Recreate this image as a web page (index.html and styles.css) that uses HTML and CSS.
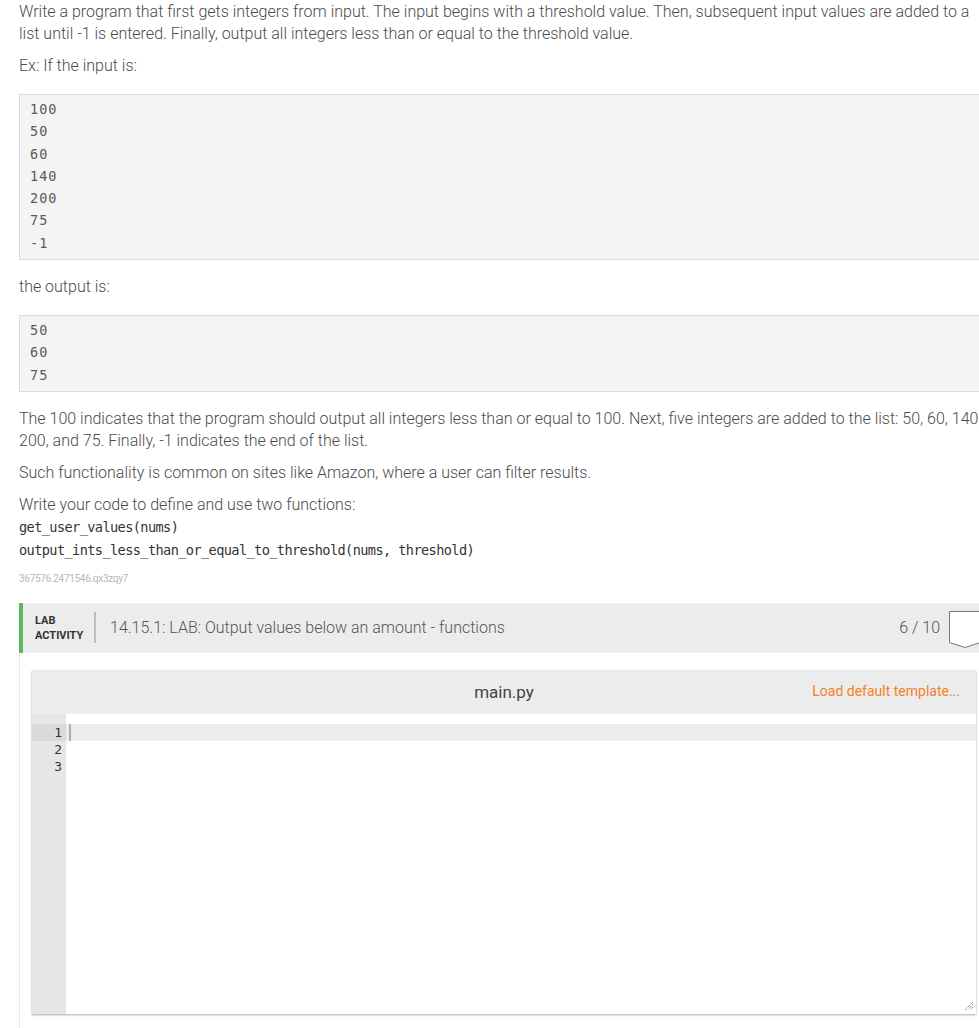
FILE: index.html
```html
<!DOCTYPE html>
<html>
<head>
<meta charset="utf-8">
<link rel="stylesheet" href="styles.css">
</head>
<body>
<div class="page">
  <p class="txt">Write a program that first gets integers from input. The input begins with a threshold value. Then, subsequent input values are added to a list until -1 is entered. Finally, output all integers less than or equal to the threshold value.</p>
  <p class="txt">Ex: If the input is:</p>
  <pre class="sample">100
50
60
140
200
75
-1</pre>
  <p class="txt">the output is:</p>
  <pre class="sample">50
60
75</pre>
  <p class="txt">The 100 indicates that the program should output all integers less than or equal to 100. Next, five integers are added to the list: 50, 60, 140, 200, and 75. Finally, -1 indicates the end of the list.</p>
  <p class="txt">Such functionality is common on sites like Amazon, where a user can filter results.</p>
  <p class="txt">Write your code to define and use two functions:<br><code class="fn">get_user_values(nums)</code><br><code class="fn">output_ints_less_than_or_equal_to_threshold(nums, threshold)</code></p>
  <div class="refid">367576.2471546.qx3zqy7</div>

  <div class="lab">
    <div class="lab-head">
      <div class="lab-label">LAB<br>ACTIVITY</div>
      <div class="lab-sep"></div>
      <div class="lab-title">14.15.1: LAB: Output values below an amount - functions</div>
      <div class="lab-score">6 / 10</div>
      <svg class="shield" width="32" height="38" viewBox="0 0 32 38">
        <path d="M0.5 0.5 H31.5 V31.5 L16 36.5 L0.5 31.5 Z" fill="#fff" stroke="#777" stroke-width="1"/>
      </svg>
    </div>
    <div class="lab-body">
      <div class="editor">
        <div class="ed-head">
          <span class="ed-file">main.py</span>
          <span class="ed-load">Load default template...</span>
        </div>
        <div class="ed-body">
          <div class="gutter">
            <div class="ln active">1</div>
            <div class="ln">2</div>
            <div class="ln">3</div>
          </div>
          <div class="code">
            <div class="cl active"><span class="cursor"></span></div>
            <div class="cl"></div>
            <div class="cl"></div>
          </div>
          <svg class="grip" width="8" height="8" viewBox="0 0 8 8">
            <path d="M8 0 L0 8 M8 2.5 L2.5 8 M8 5 L5 8" stroke="#666" stroke-width="1" stroke-dasharray="1 1"/>
          </svg>
        </div>
      </div>
    </div>
  </div>
</div>
</body>
</html>
```
FILE: styles.css
```css
html, body {
  margin: 0;
  padding: 0;
  overflow: hidden;
  background: #fff;
}
.page {
  width: 971px;
  padding: 1px 0 0 19px;
  font-family: Roboto, "Liberation Sans", sans-serif;
  font-weight: 300;
  font-size: 16px;
  color: #4b4b4b;
}
.txt {
  margin: 0 0 10px 0;
  line-height: 22px;
}
.sample {
  margin: 17px 0 16px 0;
  padding: 3px 10px 5px 10px;
  background: #f4f4f4;
  border: 1px solid #dcdcdc;
  font-family: "DejaVu Sans Mono", monospace;
  font-size: 13.5px;
  letter-spacing: 1px;
  line-height: 22.3px;
  color: #5a5a5a;
}
.fn {
  font-family: "DejaVu Sans Mono", monospace;
  font-size: 13.6px;
  letter-spacing: -0.6px;
  color: #333;
  font-weight: 400;
  line-height: 23px;
}
.refid {
  font-size: 10px;
  color: #b8b8b8;
  line-height: 14px;
  margin-top: 0;
  font-weight: 400;
  letter-spacing: -0.3px;
}
.lab {
  margin-top: 17px;
  border-left: 1px solid #e9e9e9;
}
.lab-head {
  display: flex;
  align-items: center;
  height: 50px;
  background: #ececec;
  border-left: 4px solid #5cb85c;
  margin-left: -1px;
  padding: 0 9px 0 12px;
}
.lab-label {
  font-weight: 700;
  font-size: 11px;
  line-height: 15px;
  color: #333;
  width: 59px;
  margin-top: 0;
}
.lab-sep {
  width: 2px;
  height: 31px;
  background: #bdbdbd;
  margin: 0 14px 0 0;
}
.lab-title {
  flex: 1;
  color: #555;
  font-size: 16px;
}
.lab-score {
  color: #555;
  font-size: 16px;
  margin-right: 9px;
}
.shield {
  display: block;
  margin-top: 4px;
  flex: none;
}
.lab-body {
  padding: 17px 14px 30px 12px;
}
.editor {
  box-shadow: 0 1px 2px rgba(0,0,0,0.35);
}
.ed-head {
  position: relative;
  height: 44px;
  background: #ececec;
  display: flex;
  align-items: center;
  justify-content: center;
}
.ed-file {
  font-size: 17px;
  font-weight: 400;
  color: #444;
}
.ed-load {
  position: absolute;
  right: 16px;
  top: 13px;
  font-size: 14px;
  font-weight: 400;
  color: #f5821f;
}
.ed-body {
  position: relative;
  display: flex;
  height: 300px;
  background: #fff;
}
.gutter {
  width: 34px;
  background: #e6e6e6;
  padding-top: 10px;
  font-family: "DejaVu Sans Mono", monospace;
  font-size: 13px;
  color: #333;
  font-weight: 400;
}
.ln {
  height: 17px;
  line-height: 17px;
  text-align: right;
  padding-right: 4px;
}
.ln.active {
  background: #dadada;
}
.code {
  flex: 1;
  padding-top: 10px;
}
.cl {
  height: 17px;
}
.cl.active {
  background: #ececec;
  display: flex;
  align-items: center;
}
.cursor {
  display: block;
  width: 2px;
  height: 17px;
  margin-left: 3px;
  background: #b0b0b0;
}
.grip {
  position: absolute;
  right: 3px;
  bottom: 4px;
}
```
